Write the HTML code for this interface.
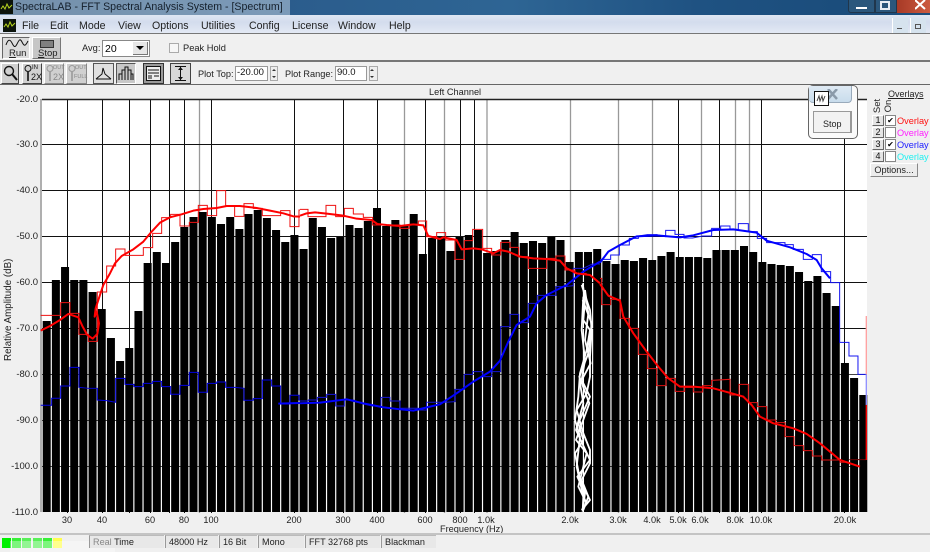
<!DOCTYPE html>
<html><head><meta charset="utf-8"><style>
html,body{margin:0;padding:0;width:930px;height:552px;overflow:hidden;background:#f0f0f0}
body{position:relative;font-family:"Liberation Sans",sans-serif;font-size:9.5px;color:#222}
.a{position:absolute;white-space:nowrap;line-height:12px}
.b{position:absolute;box-sizing:border-box}
.yl{position:absolute;left:0;width:38px;text-align:right;line-height:12px;color:#222;font-size:9.5px}
.xl{position:absolute;top:514px;width:40px;text-align:center;line-height:12px;color:#222;font-size:9.2px}
.m{position:absolute;top:19px;font-size:10.6px;line-height:14px;color:#222}
.tb{position:absolute;box-sizing:border-box;top:63px;height:21px;background:#d0d0d0;border:1px solid;border-color:#fff #444 #444 #fff}
.sec{position:absolute;top:535px;height:13px;line-height:13px;box-sizing:border-box;padding-left:3px;border-left:1px solid #999;border-top:1px solid #bbb;background:#e8e8e8;font-size:9.1px;color:#222}
.seg{position:absolute;top:538px;width:9px;height:10px;background:#00f000}
.sb{position:absolute;left:872px;width:12px;height:11px;box-sizing:border-box;background:#e4e4e4;border:1px solid;border-color:#fff #666 #666 #fff;font-size:9px;line-height:9px;text-align:center;color:#111}
.cb{position:absolute;left:885px;width:11px;height:11px;box-sizing:border-box;background:#fff;border:1px solid #888;font-size:8px;line-height:9px;text-align:center;color:#000}
.ov{position:absolute;left:897px;font-size:9.2px;line-height:12px;white-space:nowrap}
</style></head><body>
<!-- title bar -->
<div class="b" style="left:0;top:0;width:930px;height:15px;background:linear-gradient(90deg,#1c466f 0,#2b5c8c 30%,#2e6594 55%,#1f5282 75%,#1b4d7c 90%,#1b4d7c 100%)"></div>
<div class="b" style="left:0;top:0;width:290px;height:15px;background:rgba(190,205,220,.55)"></div>
<svg class="b" style="left:0;top:0" width="13" height="14"><rect width="13" height="14" fill="#0c140c"/><path d="M1 9l2-3 2 3 2-5 2 4 3-3" stroke="#b8d820" fill="none"/></svg>
<div class="a" style="left:15px;top:1px;font-size:10.6px;color:#15202c">SpectraLAB - FFT Spectral Analysis System - [Spectrum]</div>
<div class="b" style="left:848px;top:-2px;width:27px;height:15px;background:#2b577c;border:1px solid #20364c;border-radius:0 0 0 3px"></div>
<div class="b" style="left:875px;top:-2px;width:22px;height:15px;background:#2b577c;border:1px solid #20364c"></div>
<div class="b" style="left:897px;top:-2px;width:33px;height:15px;background:linear-gradient(90deg,#a73a26,#cc5a40)"></div>
<div class="b" style="left:856px;top:7px;width:11px;height:2px;background:#fff"></div>
<div class="b" style="left:880px;top:1px;width:10px;height:9px;border:2px solid #e8eef4"></div>
<svg class="b" style="left:915px;top:0" width="12" height="10"><path d="M0 0L10 9M10 0L0 9" stroke="#fff" stroke-width="2"/></svg>
<!-- menu bar -->
<div class="b" style="left:0;top:15px;width:930px;height:19px;background:linear-gradient(#dfe7f3,#d3dced 40%,#e3e9f4);border-bottom:1px solid #777"></div>
<svg class="b" style="left:3px;top:19px" width="13" height="13"><rect width="13" height="13" fill="#0c140c"/><path d="M1 8l2-3 2 3 2-5 2 4 3-3" stroke="#b8d820" fill="none"/></svg>
<div class="m" style="left:22px">File</div><div class="m" style="left:50px">Edit</div><div class="m" style="left:79px">Mode</div><div class="m" style="left:118px">View</div><div class="m" style="left:152px">Options</div><div class="m" style="left:201px">Utilities</div><div class="m" style="left:249px">Config</div><div class="m" style="left:292px">License</div><div class="m" style="left:338px">Window</div><div class="m" style="left:389px">Help</div>
<div class="b" style="left:892px;top:18px;width:16px;height:15px;background:#d6e3ee;border-left:1px solid #fff"></div>
<div class="b" style="left:910px;top:18px;width:16px;height:15px;background:#d6e3ee;border-left:1px solid #fff"></div>
<div class="b" style="left:897px;top:28px;width:5px;height:1px;background:#555"></div>
<div class="b" style="left:915px;top:24px;width:6px;height:5px;border:1px solid #555"></div>
<!-- toolbar 1 -->
<div class="b" style="left:0;top:60px;width:930px;height:2px;background:#777"></div>
<div class="b" style="left:0;top:84px;width:930px;height:1px;background:#666"></div>
<div class="b" style="left:2px;top:37px;width:28px;height:22px;background:#dcdcdc;border:1px solid;border-color:#666 #fff #fff #666"></div>
<svg class="b" style="left:5px;top:38px" width="24" height="11"><path d="M1 7C3 1 5 1 7 5S10 10 12 6 15 0 17 4 20 9 23 3" stroke="#111" fill="none"/></svg>
<div class="a" style="left:9px;top:48px;font-size:9.5px"><u>R</u>un</div>
<div class="b" style="left:32px;top:37px;width:29px;height:22px;background:#c6c6c6;border:1px solid;border-color:#fff #777 #777 #fff"></div>
<div class="b" style="left:40px;top:40px;width:14px;height:8px;background:#808080;border:1px solid #333"></div>
<div class="a" style="left:38px;top:48px;font-size:9.5px"><u>S</u>top</div>
<div class="a" style="left:82px;top:42px;font-size:9.3px">Avg:</div>
<div class="b" style="left:102px;top:40px;width:48px;height:17px;background:#fff;border:1px solid #888"></div>
<div class="a" style="left:105px;top:43px;font-size:10.5px;color:#000">20</div>
<div class="b" style="left:133px;top:42px;width:15px;height:13px;background:#e6e6e6;border-right:1px solid #777;border-bottom:1px solid #777"></div>
<svg class="b" style="left:136px;top:46px" width="9" height="5"><path d="M0 0h8L4 4z" fill="#000"/></svg>
<div class="b" style="left:169px;top:43px;width:10px;height:10px;background:#f6f6f6;border:1px solid #aaa"></div>
<div class="a" style="left:183px;top:42px;font-size:9.3px">Peak Hold</div>
<!-- toolbar 2 -->
<div class="tb" style="left:1px;width:18px"></div>
<svg class="b" style="left:3px;top:65px" width="15" height="17"><circle cx="6" cy="6" r="4.500" fill="none" stroke="#111" stroke-width="1.400"/><path d="M9 9l5 6" stroke="#111" stroke-width="2"/></svg>
<div class="tb" style="left:22px;width:20px"></div>
<div class="tb" style="left:44px;width:20px;border-color:#fff #888 #888 #fff"></div>
<div class="tb" style="left:66px;width:21px;border-color:#fff #888 #888 #fff"></div>
<svg class="b" style="left:23px;top:64px" width="64" height="19"><circle cx="5" cy="4.500" r="3" fill="none" stroke="#111"/><path d="M5 8v9" stroke="#111" stroke-width="1.600"/><circle cx="27" cy="4.500" r="3" fill="none" stroke="#999"/><path d="M27 8v9" stroke="#999" stroke-width="1.600"/><circle cx="49" cy="4.500" r="3" fill="none" stroke="#999"/><path d="M49 8v9" stroke="#999" stroke-width="1.600"/></svg>
<div class="a" style="left:32px;top:65px;font-size:6px;line-height:7px;color:#111">IN</div>
<div class="a" style="left:31px;top:72px;font-size:9px;line-height:10px;color:#111">2X</div>
<div class="a" style="left:53px;top:65px;font-size:5.500px;line-height:7px;color:#888">OUT</div>
<div class="a" style="left:53px;top:72px;font-size:9px;line-height:10px;color:#888">2X</div>
<div class="a" style="left:75px;top:65px;font-size:5.500px;line-height:7px;color:#888">OUT</div>
<div class="a" style="left:74px;top:74px;font-size:5.500px;line-height:7px;color:#888">FULL</div>
<div class="b" style="left:93px;top:63px;width:21px;height:21px;background:#e0e0e0;border:1px solid #555"></div>
<svg class="b" style="left:95px;top:66px" width="17" height="15"><path d="M1 13L7 8 8 2 10 8 16 13M1 13H16" stroke="#111" fill="none"/></svg>
<div class="b" style="left:116px;top:63px;width:20px;height:21px;background:#c8c8c8;border:1px solid;border-color:#555 #fff #fff #555"></div>
<svg class="b" style="left:118px;top:66px" width="17" height="15"><path d="M1 14V8H4V4H7V1H10V4H13V8H15V14M4 8V14M7 4V14M10 4V14M13 8V14" stroke="#111" fill="none"/></svg>
<div class="b" style="left:143px;top:63px;width:21px;height:21px;background:#9a9a9a;border:1px solid #333"></div>
<svg class="b" style="left:146px;top:66px" width="15" height="15"><rect x=".5" y=".5" width="14" height="14" fill="#eee" stroke="#111"/><path d="M2 4h11M2 7h11M2 10h4M8 10h5M2 12h4" stroke="#111"/></svg>
<div class="b" style="left:170px;top:63px;width:21px;height:21px;background:#d8d8d8;border:1px solid #444"></div>
<svg class="b" style="left:173px;top:65px" width="15" height="17"><path d="M2 1.500h11M2 15.500h11M7.500 2v13" stroke="#111"/><path d="M5 5l2.500-3 2.500 3zM5 12l2.500 3 2.500-3z" fill="#111"/></svg>
<div class="a" style="left:198px;top:68px;font-size:9.2px">Plot Top:</div>
<div class="b" style="left:235px;top:66px;width:33px;height:15px;background:#fff;border:1px solid #999"></div>
<div class="a" style="left:237px;top:67px;font-size:9.5px;color:#111">-20.00</div>
<div class="b" style="left:270px;top:66px;width:8px;height:15px;background:#eee;border:1px solid #aaa"></div>
<div class="a" style="left:285px;top:68px;font-size:9.2px">Plot Range:</div>
<div class="b" style="left:335px;top:66px;width:32px;height:15px;background:#fff;border:1px solid #999"></div>
<div class="a" style="left:337px;top:67px;font-size:9.5px;color:#111">90.0</div>
<div class="b" style="left:369px;top:66px;width:9px;height:15px;background:#eee;border:1px solid #aaa"></div>
<svg class="b" style="left:271px;top:68px" width="110" height="12"><path d="M1 3l2-2 2 2zM1 8l2 2 2-2zM99 3l2-2 2 2zM99 8l2 2 2-2z" fill="#333"/></svg>
<div class="a" style="left:429px;top:86px;font-size:9.2px">Left Channel</div>
<!-- y labels -->
<div class="yl" style="top:94px">-20.0</div><div class="yl" style="top:139px">-30.0</div><div class="yl" style="top:185px">-40.0</div><div class="yl" style="top:231px">-50.0</div><div class="yl" style="top:277px">-60.0</div><div class="yl" style="top:323px">-70.0</div><div class="yl" style="top:369px">-80.0</div><div class="yl" style="top:415px">-90.0</div><div class="yl" style="top:461px">-100.0</div><div class="yl" style="top:507px">-110.0</div>
<div class="a" style="left:-42px;top:304px;width:102px;text-align:center;transform:rotate(-90deg);font-size:9.8px">Relative Amplitude (dB)</div>
<!-- plot -->
<svg class="b" style="left:0;top:0" width="930" height="552">
<rect x="42" y="99" width="825" height="413" fill="#fff"/>
<path d="M41 99V512" stroke="#999" stroke-width="1.500"/>
<path d="M67.500 99V513M102.500 99V513M129.500 99V513M150.500 99V513M169.500 99V513M184.500 99V513M211.500 99V513M294.500 99V513M343.500 99V513M377.500 99V513M425.500 99V513M460.500 99V513M474.500 99V513M678.500 99V513M719.500 99V513M761.500 99V513M844.500 99V513" stroke="#111"/>
<path d="M199.500 99V513M404.500 99V513M444.500 99V513M487 99V513M570.500 99V513M618.500 99V513M652.500 99V513M701.500 99V513M735.500 99V513M749.500 99V513" stroke="#999" stroke-width="1.300"/>
<path d="M42 99.500H867" stroke="#222" stroke-width="1.500"/>
<path d="M42 144.500H867M42 190.500H867M42 236.500H867M42 282.500H867M42 328.500H867" stroke="#111"/>
<path d="M42 374.500H867M42 420.500H867M42 466.500H867" stroke="#444"/>
<path fill="#000" d="M42.700 512V321h8V512zm9.175 0V280h8V512zm9.175 0V267h8V512zm9.175 0V280h8V512zm9.175 0V280h8V512zm9.175 0V292h8V512zm9.175 0V309h8V512zm9.175 0V338h8V512zm9.175 0V361h8V512zm9.175 0V348h8V512zm9.175 0V311h8V512zm9.175 0V263h8V512zm9.175 0V252h8V512zm9.175 0V263h8V512zm9.175 0V242h8V512zm9.175 0V227h8V512zm9.175 0V217h8V512zm9.175 0V212h8V512zm9.175 0V217h8V512zm9.175 0V224h8V512zm9.175 0V217h8V512zm9.175 0V229h8V512zm9.175 0V214h8V512zm9.175 0V210h8V512zm9.175 0V218h8V512zm9.175 0V230h8V512zm9.175 0V242h8V512zm9.175 0V235h8V512zm9.175 0V249h8V512zm9.175 0V218h8V512zm9.175 0V227h8V512zm9.175 0V238h8V512zm9.175 0V237h8V512zm9.175 0V225h8V512zm9.175 0V228h8V512zm9.175 0V221h8V512zm9.175 0V208h8V512zm9.175 0V226h8V512zm9.175 0V220h8V512zm9.175 0V226h8V512zm9.175 0V214h8V512zm9.175 0V254h8V512zm9.175 0V238h8V512zm9.175 0V237h8V512zm9.175 0V251h8V512zm9.175 0V237h8V512zm9.175 0V235h8V512zm9.175 0V230h8V512zm9.175 0V253h8V512zm9.175 0V251h8V512zm9.175 0V240h8V512zm9.175 0V232h8V512zm9.175 0V243h8V512zm9.175 0V241h8V512zm9.175 0V243h8V512zm9.175 0V237h8V512zm9.175 0V240h8V512zm9.175 0V262h8V512zm9.175 0V252h8V512zm9.175 0V252h8V512zm9.175 0V249h8V512zm9.175 0V261h8V512zm9.175 0V264h8V512zm9.175 0V260h8V512zm9.175 0V261h8V512zm9.175 0V258h8V512zm9.175 0V260h8V512zm9.175 0V256h8V512zm9.175 0V252h8V512zm9.175 0V257h8V512zm9.175 0V257h8V512zm9.175 0V257h8V512zm9.175 0V258h8V512zm9.175 0V250h8V512zm9.175 0V250h8V512zm9.175 0V250h8V512zm9.175 0V246h8V512zm9.175 0V252h8V512zm9.175 0V262h8V512zm9.175 0V264h8V512zm9.175 0V265h8V512zm9.175 0V266h8V512zm9.175 0V272h8V512zm9.175 0V281h8V512zm9.175 0V276h8V512zm9.175 0V293h8V512zm9.175 0V306h8V512zm9.175 0V363h8V512zm9.175 0V378h8V512zm9.175 0V395h8V512z"/>
<!-- white squiggle -->
<g transform="translate(540,280) scale(.3333)" fill="none" stroke="#fff" stroke-width="5.500" stroke-linejoin="round">
<polyline points="128,10 135,60 130,120 150,150 140,210 120,280 115,350 105,420 120,470 110,560 130,650 128,695"/>
<polyline points="125,15 150,90 155,150 150,230 150,290 140,340 110,390 130,460 150,510 150,550 125,600 145,650 130,690"/>
<polyline points="130,50 125,150 135,240 125,300 150,350 115,430 130,480 105,520 120,600 150,660 125,690"/>
<polyline points="135,30 145,100 135,180 152,250 120,310 130,370 108,450 150,540 112,590 135,640 128,690"/>
<polyline points="128,60 155,130 145,220 118,290 148,370 108,480 140,520 115,620 140,670"/>
</g>
<!-- left segment -->
<g transform="translate(0,180) scale(.3333)" fill="none" stroke-linejoin="miter">
<polyline stroke="#0000e0" stroke-width="3" points="122,676 155,676 155,655 182,655 182,618 210,618 210,562 237,562 237,622 265,625 292,625 292,660 320,662 347,667 347,595 375,595 375,613 402,613 402,620 430,620 430,610 458,610 458,604 485,604 485,620 512,620 512,643 540,643 540,616 568,616 568,577 595,577 595,637 622,637 622,610 650,610 650,606 677,606 677,622 704,622 732,625 732,661 760,661 760,656 787,656 787,600 815,600 815,618 842,618 842,672 870,672 870,646 897,646 897,660 900,660"/>
<polyline stroke="#ee1111" stroke-width="3" points="122,406 182,406 182,368 210,368 210,400 237,400 237,463 265,463 265,484 292,484 292,336 320,336 320,258 347,258 347,207 375,207 375,226 430,226 430,203 458,203 458,160 485,160 485,113 512,113 512,103 540,103 540,138 568,138 568,127 595,127 595,76 622,76 622,107 650,107 650,32 677,32 677,78 704,78 704,109 732,109 732,71 760,71 760,85 787,85 787,107 842,107 842,92 870,92 870,140 897,140 897,90 900,90"/>
<polyline stroke="#0000ff" stroke-width="6" points="835,671 900,669"/>
<polyline stroke="#ff0000" stroke-width="6" stroke-linejoin="round" points="122,452 150,438 180,420 205,402 235,412 248,440 262,465 278,476 292,462 297,430 290,395 284,410 287,385 300,345 310,315 330,280 345,250 365,228 400,208 430,185 455,155 480,128 510,112 545,103 580,92 610,87 650,84 680,78 720,78 770,84 810,92 850,100 880,109 900,110"/>
</g>
<!-- middle segment -->
<g transform="translate(300,190) scale(.3333)" fill="none">
<polyline stroke="#1414d8" stroke-width="3" points="0,633 25,633 25,630 52,630 52,622 80,622 80,613 107,613 107,648 133,648 133,630 160,630 190,642 218,648 243,648 243,622 270,622 270,633 300,633 300,655 355,655 355,660 380,660 380,637 410,637 437,637 465,635 465,598 493,598 493,553 518,553 518,545 548,545 548,560 575,560 575,545 602,545 602,410 630,410 630,373 656,373 656,398 685,398 685,340 712,340 712,316 768,316 768,290 795,290 820,287 820,235 850,235 877,222 900,222"/>
<polyline stroke="#ee1111" stroke-width="3" points="0,58 24,58 24,80 78,80 78,46 107,46 107,80 133,80 133,55 160,55 160,72 190,72 190,82 218,82 218,105 300,105 300,115 328,115 328,103 355,103 355,93 380,93 380,140 410,140 410,128 437,128 437,150 465,150 465,208 493,208 493,152 518,152 518,118 548,118 548,175 575,175 575,195 602,195 602,157 630,157 630,172 656,172 656,200 685,200 685,235 740,235 740,205 768,205 768,198 795,198 795,240 825,240 825,250 860,250"/>
<polyline stroke="#0000ff" stroke-width="6" stroke-linejoin="round" points="0,640 60,638 140,628 190,640 250,652 300,658 340,662 390,650 420,643 470,610 520,575 570,545 600,512 625,455 650,405 690,380 710,340 740,315 800,285 850,245 900,215"/>
<polyline stroke="#ff0000" stroke-width="6" stroke-linejoin="round" points="0,77 20,70 45,67 80,71 130,77 170,86 215,90 232,102 260,105 300,108 340,103 370,106 385,138 420,147 430,142 470,150 485,178 520,175 545,178 580,190 600,180 625,185 660,200 700,205 740,207 780,212 800,235 830,250 870,255 900,280"/>
</g>
<!-- right segment -->
<g transform="translate(600,210) scale(.3333)" fill="none">
<polyline stroke="#1414f0" stroke-width="3" points="0,148 32,148 32,135 58,135 58,105 88,105 88,85 115,85 115,78 142,74 170,74 197,80 197,61 225,61 225,73 252,73 252,84 278,84 308,78 335,78 335,55 362,55 362,48 390,48 390,58 415,58 415,41 445,41 445,65 472,65 472,85 500,85 500,98 555,98 555,104 580,104 580,118 610,118 610,148 637,148 637,134 664,134 664,185 692,185 692,218 719,218 719,397 747,397 747,438 774,438 774,493 799,493"/>
<polyline stroke="#e01010" stroke-width="3" points="0,205 5,205 5,284 32,284 32,268 60,268 60,325 88,325 88,355 115,355 115,433 142,433 142,476 170,476 170,527 198,527 198,505 226,505 226,544 254,544 254,532 280,532 280,546 308,546 308,527 335,527 335,511 390,508 390,555 417,555 417,523 445,523 445,578 472,578 472,590 500,590 500,630 527,630 527,638 555,638 555,680 582,680 582,707 610,707 610,722 637,722 637,738 665,738 665,750 720,750 720,757 748,757"/>
<polyline stroke="#600" stroke-width="3" points="748,749 798,749"/>
<polyline stroke="#ffa0a0" stroke-width="4" points="799,318 799,493"/>
<polyline stroke="#9090ff" stroke-width="4" points="799,493 799,585"/>
<polyline stroke="#f00" stroke-width="4" points="799,585 799,750"/>
<polyline stroke="#0000ff" stroke-width="6" stroke-linejoin="round" points="0,158 25,125 60,105 110,79 170,76 240,82 280,76 340,60 400,58 470,68 500,92 570,112 620,132 650,150 665,175 690,205"/>
<polyline stroke="#ff0000" stroke-width="6" stroke-linejoin="round" points="0,222 25,257 60,272 70,320 100,370 140,425 175,470 205,505 240,530 280,530 340,535 395,550 430,560 455,585 480,620 520,640 580,655 620,672 660,700 720,750 780,770"/>
</g>
</svg>
<!-- x labels -->
<div class="xl" style="left:47px">30</div><div class="xl" style="left:82px">40</div><div class="xl" style="left:130px">60</div><div class="xl" style="left:164px">80</div><div class="xl" style="left:191px">100</div><div class="xl" style="left:274px">200</div><div class="xl" style="left:323px">300</div><div class="xl" style="left:357px">400</div><div class="xl" style="left:405px">600</div><div class="xl" style="left:440px">800</div><div class="xl" style="left:466px">1.0k</div><div class="xl" style="left:550px">2.0k</div><div class="xl" style="left:598px">3.0k</div><div class="xl" style="left:632px">4.0k</div><div class="xl" style="left:658px">5.0k</div><div class="xl" style="left:680px">6.0k</div><div class="xl" style="left:715px">8.0k</div><div class="xl" style="left:741px">10.0k</div><div class="xl" style="left:825px">20.0k</div>
<div class="a" style="left:440px;top:523px;font-size:9.2px">Frequency (Hz)</div>
<!-- status bar -->
<div class="b" style="left:0;top:533px;width:930px;height:2px;background:#c4c4c4"></div>
<div class="seg" style="left:2px"></div><div class="seg" style="left:12px;background:#38f038"></div><div class="seg" style="left:22px;background:#58f058"></div><div class="seg" style="left:33px;background:#58f058"></div><div class="seg" style="left:43px;background:#38f038"></div><div class="seg" style="left:53px;background:#ffff50"></div>
<div class="b" style="left:10px;top:541px;width:105px;height:11px;background:rgba(255,255,255,.35)"></div>
<div class="sec" style="left:89px;width:75px"><span style="color:#888">Real</span> Time</div>
<div class="sec" style="left:165px;width:53px">48000 Hz</div>
<div class="sec" style="left:219px;width:38px">16 Bit</div>
<div class="sec" style="left:258px;width:46px">Mono</div>
<div class="sec" style="left:305px;width:75px">FFT 32768 pts</div>
<div class="sec" style="left:381px;width:55px">Blackman</div>
<!-- floating stop -->
<div class="b" style="left:808px;top:85px;width:50px;height:54px;background:#fafafa;border:1px solid #666;border-radius:5px"></div>
<div class="b" style="left:809px;top:86px;width:43px;height:17px;background:linear-gradient(#dfeaf4,#c8dcec);border-right:1px solid #9ab;border-bottom:1px solid #9ab;border-radius:0 0 4px 4px"></div>
<svg class="b" style="left:827px;top:89px" width="12" height="11"><path d="M1 0L10 10M10 0L1 10" stroke="#8a9aaa" stroke-width="2.500"/></svg>
<div class="b" style="left:814px;top:91px;width:15px;height:15px;background:#fff;border:1px solid #111"></div>
<svg class="b" style="left:816px;top:94px" width="11" height="9"><path d="M1 7L3 2 4 7 6 2 7 7 9 2" stroke="#444" fill="none"/></svg>
<div class="b" style="left:813px;top:111px;width:39px;height:22px;background:#f2f2f2;border:1px solid #999;border-right:2px solid #999"></div>
<div class="a" style="left:823px;top:118px;font-size:9px">Stop</div>
<!-- overlays panel -->
<div class="a" style="left:888px;top:88px;font-size:9px;text-decoration:underline">Overlays</div>
<div class="a" style="left:870px;top:100px;font-size:9.5px;transform:rotate(-90deg);width:16px;text-align:center">Set</div>
<div class="a" style="left:881px;top:100px;font-size:9.5px;transform:rotate(-90deg);width:16px;text-align:center">On</div>
<div class="sb" style="top:115px">1</div><div class="cb" style="top:115px">&#10004;</div><div class="ov" style="top:115px;color:#ff1010">Overlay 1</div>
<div class="sb" style="top:127px">2</div><div class="cb" style="top:127px"></div><div class="ov" style="top:127px;color:#ff20ff">Overlay 2</div>
<div class="sb" style="top:139px">3</div><div class="cb" style="top:139px">&#10004;</div><div class="ov" style="top:139px;color:#2020ff">Overlay 3</div>
<div class="sb" style="top:151px">4</div><div class="cb" style="top:151px"></div><div class="ov" style="top:151px;color:#20f0f0">Overlay 4</div>
<div class="b" style="left:870px;top:163px;width:48px;height:14px;background:#ececec;border:1px solid;border-color:#fff #888 #888 #fff;font-size:9.2px;line-height:12px;text-align:center">Options...</div>
</body></html>
